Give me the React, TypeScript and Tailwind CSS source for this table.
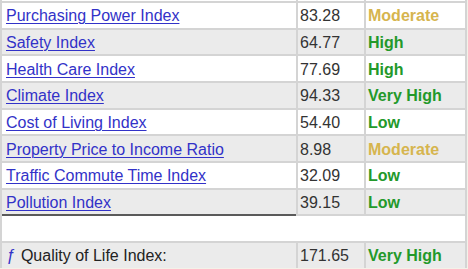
import React from 'react';

type Level = 'Low' | 'Moderate' | 'High' | 'Very High';

interface Row {
  name: string;
  value: string;
  level: Level;
}

const rows: Row[] = [
  { name: 'Purchasing Power Index', value: '83.28', level: 'Moderate' },
  { name: 'Safety Index', value: '64.77', level: 'High' },
  { name: 'Health Care Index', value: '77.69', level: 'High' },
  { name: 'Climate Index', value: '94.33', level: 'Very High' },
  { name: 'Cost of Living Index', value: '54.40', level: 'Low' },
  { name: 'Property Price to Income Ratio', value: '8.98', level: 'Moderate' },
  { name: 'Traffic Commute Time Index', value: '32.09', level: 'Low' },
  { name: 'Pollution Index', value: '39.15', level: 'Low' },
];

const levelColor = (level: Level) =>
  level === 'Moderate' ? 'text-[#d6b54e]' : 'text-[#23992a]';

const App: React.FC = () => {
  return (
    <div className="w-[468px] h-[269px] overflow-hidden bg-[#f4f1e8] font-['Liberation_Sans',Arial,sans-serif] text-[16px] leading-none">
      <div className="w-[467px] grid grid-cols-[294px_66px_99px] auto-rows-[24.67px] grid-rows-[1px] gap-[2px] bg-[#d4d4d4] px-[2px]">
        <div className="bg-white" />
        <div className="bg-white" />
        <div className="bg-white" />

        {rows.map((row, i) => {
          const bg = i % 2 === 0 ? 'bg-white' : 'bg-[#ebebeb]';
          const last = i === rows.length - 1;
          return (
            <React.Fragment key={row.name}>
              <div
                className={`${bg} flex items-center pt-[2px] pl-[4px] ${last ? 'shadow-[0_2px_0_#5a5a5a]' : ''}`}
              >
                <a href="#" className="text-[#3232c8] underline underline-offset-[2px] decoration-1">
                  {row.name}
                </a>
              </div>
              <div className={`${bg} flex items-center pt-[2px] pl-[2px] text-[#333333]`}>{row.value}</div>
              <div className={`${bg} flex items-center pt-[2px] pl-[2px] font-bold ${levelColor(row.level)}`}>
                {row.level}
              </div>
            </React.Fragment>
          );
        })}

        <div className="col-span-3 bg-white" />

        <div className="bg-[#ebebeb] flex items-center pt-[2px] pl-[4px] text-[#222222]">
          <span className="italic text-[#3232c8] mr-[6px]">ƒ</span>
          Quality of Life Index:
        </div>
        <div className="bg-[#ebebeb] flex items-center pt-[2px] pl-[2px] text-[#333333]">171.65</div>
        <div className="bg-[#ebebeb] flex items-center pt-[2px] pl-[2px] font-bold text-[#23992a]">Very High</div>
      </div>
    </div>
  );
};

export default App;
